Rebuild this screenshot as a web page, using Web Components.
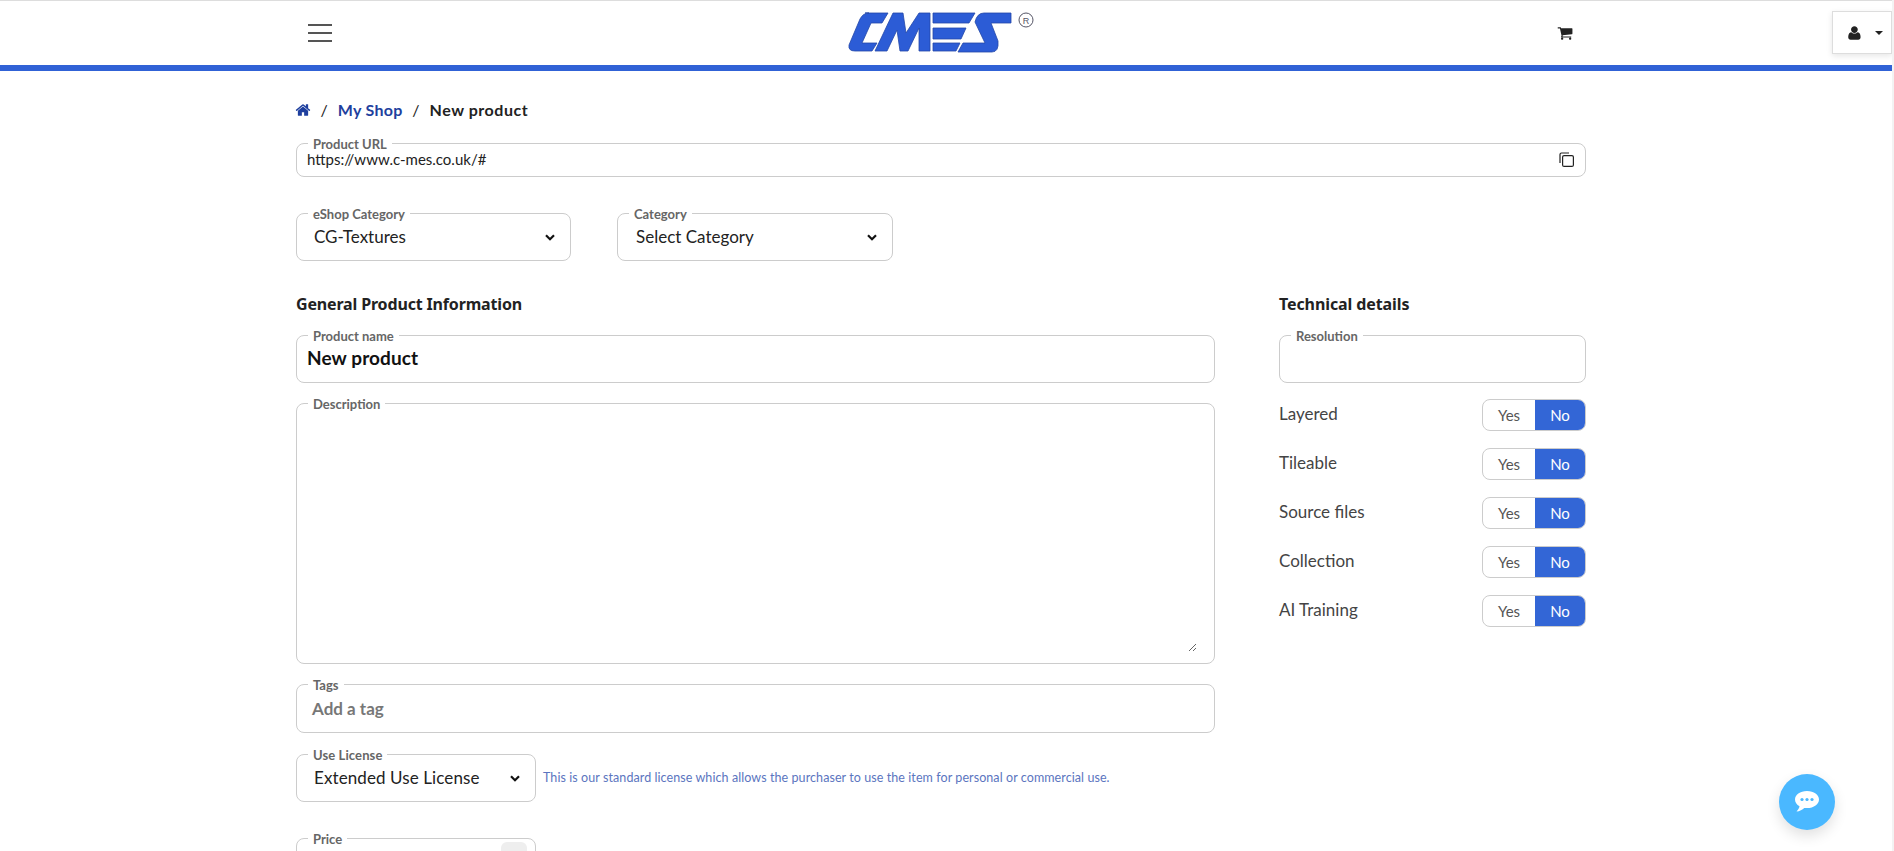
<!DOCTYPE html>
<html lang="en">
<head>
<meta charset="utf-8">
<title>New product</title>
<style>
  html, body { margin: 0; height: 100%; overflow: hidden; background: #f3f3f3; font-family: Lato, "Open Sans", sans-serif; }
</style>
</head>
<body>
<shop-page>
  <shop-header slot="header"></shop-header>
  <shop-breadcrumb></shop-breadcrumb>

  <form-field label="Product URL" style="--h:34px;--gap:15px;--pb:2px">
    <span class="url">https://www.c-mes.co.uk/#</span>
    <copy-icon slot="end"></copy-icon>
  </form-field>

  <field-row style="--gap:30px;--row-gap:46px">
    <select-field label="eShop Category" value="CG-Textures" style="--w:275px"></select-field>
    <select-field label="Category" value="Select Category" style="--w:276px;--pl:18px"></select-field>
  </field-row>

  <two-columns>
    <div slot="main">
      <section-title style="letter-spacing:-.16px">General Product Information</section-title>
      <form-field label="Product name" style="--h:48px;--pb:2px" strong>New product</form-field>
      <desc-field label="Description"></desc-field>
      <form-field label="Tags" style="--h:49px;--gap:14px" muted>Add a tag</form-field>
      <field-row style="--gap:15px;--row-gap:7px">
        <select-field label="Use License" value="Extended Use License" style="--w:240px;letter-spacing:.1px"></select-field>
        <field-hint>This is our standard license which allows the purchaser to use the item for personal or commercial use.</field-hint>
      </field-row>
      <price-field label="Price"></price-field>
    </div>
    <div slot="side">
      <section-title>Technical details</section-title>
      <form-field label="Resolution" style="--h:48px"></form-field>
      <yes-no label="Layered" first></yes-no>
      <yes-no label="Tileable"></yes-no>
      <yes-no label="Source files"></yes-no>
      <yes-no label="Collection"></yes-no>
      <yes-no label="AI Training"></yes-no>
    </div>
  </two-columns>
</shop-page>
<chat-button></chat-button>

<script>
function shadow(el, html) {
  el.attachShadow({ mode: 'open' });
  el.shadowRoot.innerHTML = html;
}

const CHEVRON = `<svg width="10" height="7" viewBox="0 0 10 7"><path d="M1 1.200l4 4 4-4" fill="none" stroke="#111" stroke-width="2.200"/></svg>`;

class ShopPage extends HTMLElement {
  connectedCallback() {
    shadow(this, `
      <style>
        :host { display: block; width: 1892px; height: 851px; overflow: hidden; background: #fff; color: #222; }
        .content { padding: 27px 0 0 296px; width: 1290px; }
      </style>
      <slot name="header"></slot>
      <div class="content"><slot></slot></div>
    `);
  }
}

class ShopHeader extends HTMLElement {
  connectedCallback() {
    shadow(this, `
      <style>
        :host { display: block; }
        header { display: flex; align-items: center; height: 64px; padding-left: 308px; border-top: 1px solid #ddd; border-bottom: 6px solid #3062d6; }
        .burger { width: 24px; height: 18px; display: flex; flex-direction: column; justify-content: space-between; }
        .burger i { display: block; height: 2px; background: #555; }
        .logo { margin-left: 516px; display: block; }
        .cart { margin-left: 517px; display: block; }
        .user { margin-left: auto; width: 60px; height: 43px; box-sizing: border-box; border: 1px solid #ddd; background: #fff; box-shadow: 0 2px 6px rgba(0,0,0,.1); display: flex; align-items: center; padding-left: 15px; gap: 13px; margin-top: -1px; }
        .caret { width: 0; height: 0; border: 4px solid transparent; border-top-color: #222; border-bottom: 0; }
      </style>
      <header>
        <div class="burger"><i></i><i></i><i></i></div>
        <svg class="logo" width="192" height="50" viewBox="848 8 192 50">
          <g fill="#2c5cd6" stroke="#2347a8" stroke-width=".8" stroke-linejoin="round">
            <path d="M865 13H888L882 23H871L862 43H877L872 51H855Q848 51 849 45L860 19Q863 13 869 13Z"/>
            <path d="M875 51L893 13H903L906 33L919 13H930V51H919V28L908 51H900L897 30L887 51Z"/>
            <path d="M933 13H975L969 23H933Z"/>
            <path d="M933 28H966L961 39H933Z"/>
            <path d="M933 43H960L956 51H933Z"/>
            <path d="M984 13H1011V23H991L998 41Q999 52 992 52H958L963 43H985L975 22Q977 13 984 13Z"/>
          </g>
          <circle cx="1026" cy="20" r="7" fill="none" stroke="#556" stroke-width="1"/>
          <text x="1026" y="23.500" font-family="Liberation Sans, sans-serif" font-size="9" fill="#556" text-anchor="middle">R</text>
        </svg>
        <svg class="cart" width="16" height="16" viewBox="0 0 1792 1792"><path fill="#222" d="M704 1536q0 52-38 90t-90 38-90-38-38-90 38-90 90-38 90 38 38 90zm896 0q0 52-38 90t-90 38-90-38-38-90 38-90 90-38 90 38 38 90zm128-1088v512q0 24-16.500 42.500t-40.500 21.500l-1044 122q13 60 13 70 0 16-24 64h920q26 0 45 19t19 45-19 45-45 19h-1024q-26 0-45-19t-19-45q0-11 8-31.500t16-36 21.500-40 15.500-29.500l-177-823h-204q-26 0-45-19t-19-45 19-45 45-19h256q16 0 27.500 7t18 16.500 11 22.500 6.500 26.500 5 23.500h1201q26 0 45 19t19 45z"/></svg>
        <div class="user">
          <svg width="14" height="14" viewBox="200 100 1400 1600"><path fill="#222" d="M1536 1399q0 120-73 189.500t-194 69.500h-874q-121 0-194-69.500t-73-189.500q0-53 3.500-103.500t14-109 26.500-108.500 43-97.500 62-81 85.500-53.500 111.500-20q9 0 42 21.500t74.500 48 108 48 133.500 21.500 133.500-21.500 108-48 74.500-48 42-21.500q61 0 111.500 20t85.500 53.500 62 81 43 97.500 26.500 108.500 14 109 3.500 103.500zm-320-893q0 159-112.500 271.500t-271.500 112.500-271.500-112.500-112.500-271.500 112.500-271.500 271.500-112.500 271.500 112.500 112.500 271.500z"/></svg>
          <span class="caret"></span>
        </div>
      </header>
    `);
  }
}

class ShopBreadcrumb extends HTMLElement {
  connectedCallback() {
    shadow(this, `
      <style>
        :host { display: flex; align-items: center; height: 24px; font: 700 16px/24px Lato, sans-serif; color: #222; letter-spacing: .55px; }
        a { color: #1e3f9e; text-decoration: none; letter-spacing: .3px; }
        .sep { margin: 0 9.500px; font-weight: 400; }
        svg { display: block; margin-left: -1px; }
      </style>
      <svg width="16" height="16" viewBox="0 0 1792 1792"><path fill="#1e3f9e" d="M1472 992v480q0 26-19 45t-45 19h-384v-384h-256v384h-384q-26 0-45-19t-19-45v-480q0-1 .5-3t.5-3l575-474 575 474q1 2 1 6zm223-69l-62 74q-8 9-21 11h-3q-13 0-21-7l-692-577-692 577q-12 8-24 7-13-2-21-11l-62-74q-8-10-7-23.500t11-21.500l719-599q32-26 76-26t76 26l244 204v-195q0-14 9-23t23-9h192q14 0 23 9t9 23v408l219 182q10 8 11 21.500t-7 23.500z"/></svg>
      <span class="sep">/</span><a href="#">My Shop</a><span class="sep">/</span><span>New product</span>
    `);
  }
}

const FIELD_CSS = `
  fieldset { margin: 0; padding: 0 0 6px; border: 1px solid #ccc; border-radius: 8px; min-width: 0; box-sizing: border-box; height: calc(var(--h, 48px) + 6px); }
  legend { margin-left: 11px; padding: 2px 5px 0; font: 700 13px/11px Lato, sans-serif; color: #666; }
`;

class FormField extends HTMLElement {
  connectedCallback() {
    const cls = this.hasAttribute('strong') ? 'strong' : this.hasAttribute('muted') ? 'muted' : '';
    shadow(this, `
      <style>
        :host { display: block; margin-top: var(--gap, 0); font: 400 15px/18px Lato, sans-serif; color: #222; }
        ${FIELD_CSS}
        .body { height: 100%; display: flex; align-items: center; justify-content: space-between; padding: 0 11px var(--pb, 0) 10px; box-sizing: border-box; }
        .strong { font: 700 19px/22px Lato, sans-serif; letter-spacing: .1px; color: #111; }
        .muted { font: 700 17px/22px Lato, sans-serif; color: #777; padding-left: 15px; }
      </style>
      <fieldset>
        <legend>${this.getAttribute('label')}</legend>
        <div class="body ${cls}"><span><slot></slot></span><slot name="end"></slot></div>
      </fieldset>
    `);
  }
}

class SelectField extends HTMLElement {
  connectedCallback() {
    shadow(this, `
      <style>
        :host { display: block; width: var(--w); flex: none; font: 400 17px/22px Lato, sans-serif; color: #222; }
        ${FIELD_CSS}
        fieldset { height: 54px; }
        .body { height: 100%; display: flex; align-items: center; justify-content: space-between; padding: 0 15px 0 var(--pl, 17px); box-sizing: border-box; }
        svg { display: block; }
      </style>
      <fieldset>
        <legend>${this.getAttribute('label')}</legend>
        <div class="body"><span>${this.getAttribute('value')}</span>${CHEVRON}</div>
      </fieldset>
    `);
  }
}

class DescField extends HTMLElement {
  connectedCallback() {
    shadow(this, `
      <style>
        :host { display: block; margin-top: 14px; }
        ${FIELD_CSS}
        fieldset { height: 267px; }
        textarea { display: block; width: 100%; height: 100%; box-sizing: border-box; border: 0; outline: 0; background: transparent; resize: vertical; padding: 4px 10px; margin: 0; }
        .wrap { height: 100%; padding: 0 17px 5px 0; box-sizing: border-box; }
      </style>
      <fieldset>
        <legend>${this.getAttribute('label')}</legend>
        <div class="wrap"><textarea aria-label="Description"></textarea></div>
      </fieldset>
    `);
  }
}

class PriceField extends HTMLElement {
  connectedCallback() {
    shadow(this, `
      <style>
        :host { display: block; width: 240px; margin-top: 30px; }
        ${FIELD_CSS}
        .body { height: 42px; display: flex; justify-content: flex-end; padding-right: 8px; }
        .chip { width: 26px; height: 30px; margin-top: -3px; border-radius: 6px; background: #eee; }
      </style>
      <fieldset>
        <legend>${this.getAttribute('label')}</legend>
        <div class="body"><div class="chip"></div></div>
      </fieldset>
    `);
  }
}

class FieldRow extends HTMLElement {
  connectedCallback() {
    shadow(this, `
      <style>
        :host { display: flex; margin-top: var(--gap, 0); gap: var(--row-gap, 0); }
      </style>
      <slot></slot>
    `);
  }
}

class FieldHint extends HTMLElement {
  connectedCallback() {
    shadow(this, `
      <style>
        :host { display: block; align-self: center; padding-top: 6px; font: 400 12.500px/16px Lato, sans-serif; letter-spacing: .08px; color: #5b75c0; white-space: nowrap; }
      </style>
      <slot></slot>
    `);
  }
}

class TwoColumns extends HTMLElement {
  connectedCallback() {
    shadow(this, `
      <style>
        :host { display: grid; grid-template-columns: 919px 307px; column-gap: 64px; margin-top: 32px; }
      </style>
      <slot name="main"></slot>
      <slot name="side"></slot>
    `);
  }
}

class SectionTitle extends HTMLElement {
  connectedCallback() {
    shadow(this, `
      <style>
        :host { display: block; margin-bottom: 14px; font: 700 16px/22px "Noto Sans", sans-serif; color: #222; letter-spacing: -.1px; }
      </style>
      <slot></slot>
    `);
  }
}

class YesNo extends HTMLElement {
  connectedCallback() {
    shadow(this, `
      <style>
        :host { display: flex; align-items: center; justify-content: space-between; height: 32px; margin-top: ${this.hasAttribute('first') ? '16px' : '16.900px'}; font: 400 17px/20px Lato, sans-serif; color: #444; }
        .label { padding-bottom: 2px; }
        .toggle { display: flex; width: 104px; height: 32px; box-sizing: border-box; border: 1px solid #ccc; border-radius: 8px; overflow: hidden; font-size: 15px; }
        .toggle span { display: flex; align-items: center; justify-content: center; }
        .yes { flex: 1; color: #555; }
        .no { width: 50px; background: #3366d6; color: #fff; }
      </style>
      <span class="label">${this.getAttribute('label')}</span>
      <div class="toggle"><span class="yes">Yes</span><span class="no">No</span></div>
    `);
  }
}

class CopyIcon extends HTMLElement {
  connectedCallback() {
    shadow(this, `
      <style>
        :host { display: block; width: 15px; height: 15px; margin-top: 1px; }
        svg { display: block; }
      </style>
      <svg width="15" height="15" viewBox="0 0 15 15" fill="none" stroke="#222" stroke-width="1.200">
        <path d="M10 1H2.500A1.500 1.500 0 0 0 1 2.500V11"/>
        <rect x="3.600" y="3.600" width="10.800" height="10.800" rx="1.500"/>
      </svg>
    `);
  }
}

class ChatButton extends HTMLElement {
  connectedCallback() {
    shadow(this, `
      <style>
        :host { position: fixed; left: 1779px; top: 774px; width: 56px; height: 56px; border-radius: 50%; background: #4ab8ff; box-shadow: 0 6px 14px rgba(0,0,0,.12); display: flex; align-items: center; justify-content: center; }
        svg { display: block; }
      </style>
      <svg width="26" height="22" viewBox="0 0 26 22">
        <path fill="#fff" d="M13 0C6 0 1 3.800 1 8.500c0 2.800 1.700 5.200 4.500 6.800C5.200 17.200 4 19 2.500 20.500c3.200-.3 6-1.800 7.700-3.600.9.100 1.900.2 2.800.2 7 0 12-3.900 12-8.600S20 0 13 0z"/>
        <circle cx="8" cy="8.500" r="1.600" fill="#4ab8ff"/><circle cx="13" cy="8.500" r="1.600" fill="#4ab8ff"/><circle cx="18" cy="8.500" r="1.600" fill="#4ab8ff"/>
      </svg>
    `);
  }
}

customElements.define('shop-page', ShopPage);
customElements.define('shop-header', ShopHeader);
customElements.define('shop-breadcrumb', ShopBreadcrumb);
customElements.define('form-field', FormField);
customElements.define('select-field', SelectField);
customElements.define('desc-field', DescField);
customElements.define('price-field', PriceField);
customElements.define('field-row', FieldRow);
customElements.define('field-hint', FieldHint);
customElements.define('two-columns', TwoColumns);
customElements.define('section-title', SectionTitle);
customElements.define('yes-no', YesNo);
customElements.define('copy-icon', CopyIcon);
customElements.define('chat-button', ChatButton);
</script>
</body>
</html>
